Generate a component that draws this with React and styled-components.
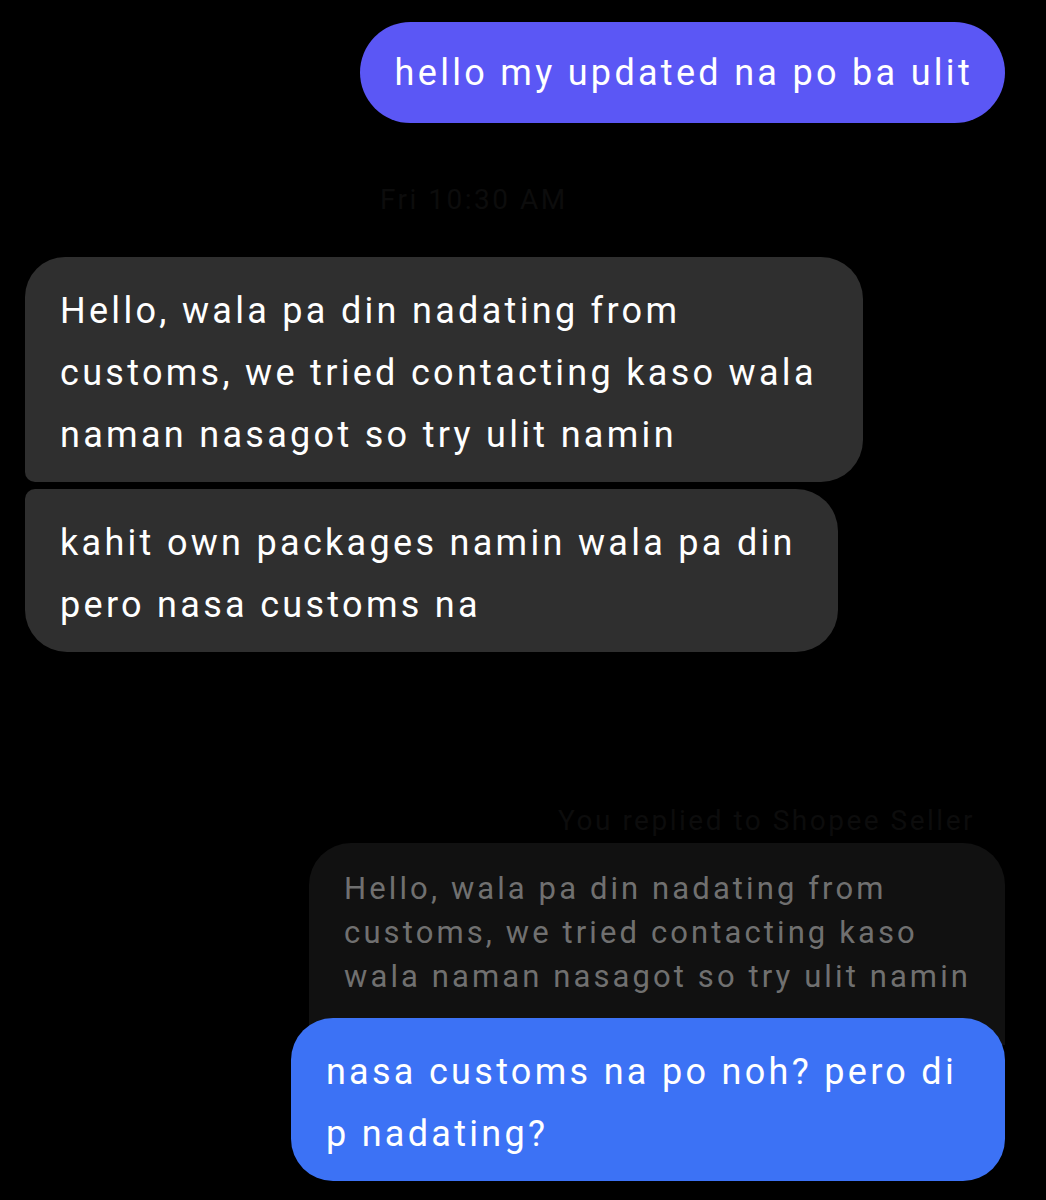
import React from 'react';
import styled, { createGlobalStyle } from 'styled-components';

const GlobalStyle = createGlobalStyle`
  html, body {
    margin: 0;
    padding: 0;
    background: #000;
  }
  body {
    font-family: Roboto, "Liberation Sans", sans-serif;
    -webkit-font-smoothing: antialiased;
  }
`;

const Thread = styled.div`
  width: 1046px;
  height: 1200px;
  box-sizing: border-box;
  padding: 22px 41px 0 25px;
  display: flex;
  flex-direction: column;
  overflow: hidden;
`;

const Row = styled.div`
  display: flex;
  justify-content: ${(p) => (p.$mine ? 'flex-end' : 'flex-start')};
  margin-top: ${(p) => p.$gap || 0}px;
`;

const Stamp = styled.div`
  font-size: 28px;
  line-height: 34px;
  letter-spacing: 2.5px;
  color: #0c0c0c;
  padding-left: ${(p) => p.$indent || 0}px;
  text-align: ${(p) => (p.$right ? 'right' : 'left')};
  padding-right: ${(p) => (p.$right ? 30 : 0)}px;
`;

const tones = {
  indigo: { bg: '#5b57f5', fg: '#ffffff' },
  gray: { bg: '#2f2f2f', fg: '#ffffff' },
  blue: { bg: '#3c72f5', fg: '#ffffff' },
};

const Bubble = styled.div`
  box-sizing: border-box;
  width: fit-content;
  background: ${(p) => tones[p.$tone].bg};
  color: ${(p) => tones[p.$tone].fg};
  font-size: 36px;
  line-height: 62px;
  letter-spacing: 3.3px;
  padding: 23px ${(p) => p.$padRight || 44}px 16px 35px;
  border-radius: ${(p) => p.$radius || '42px'};
  position: relative;
  z-index: 1;
  white-space: nowrap;
`;

const Pill = styled(Bubble)`
  padding: 20px 32px 19px 35px;
  border-radius: 52px;
`;

const ReplyStack = styled.div`
  display: flex;
  flex-direction: column;
  align-items: flex-end;
`;

const Quote = styled.div`
  box-sizing: border-box;
  width: fit-content;
  background: #111111;
  color: #707070;
  font-size: 31px;
  line-height: 44px;
  letter-spacing: 3.1px;
  padding: 24px 34px 46px 35px;
  border-radius: 42px 42px 0 0;
  white-space: nowrap;
`;

const Lines = ({ lines }) =>
  lines.map((l, i) => (
    <React.Fragment key={i}>
      {l}
      {i < lines.length - 1 && <br />}
    </React.Fragment>
  ));

export default function App() {
  return (
    <>
      <GlobalStyle />
      <Thread>
        <Row $mine>
          <Pill $tone="indigo">hello my updated na po ba ulit</Pill>
        </Row>

        <Stamp $indent={355} style={{ marginTop: 60 }}>
          Fri 10:30 AM
        </Stamp>

        <Row $gap={40}>
          <Bubble $tone="gray" $padRight={46} $radius="40px 42px 42px 10px">
            <Lines
              lines={[
                'Hello, wala pa din nadating from',
                'customs, we tried contacting kaso wala',
                'naman nasagot so try ulit namin',
              ]}
            />
          </Bubble>
        </Row>
        <Row $gap={7}>
          <Bubble $tone="gray" $padRight={42} $radius="10px 42px 42px 42px">
            <Lines lines={['kahit own packages namin wala pa din', 'pero nasa customs na']} />
          </Bubble>
        </Row>

        <Stamp $right style={{ marginTop: 152 }}>
          You replied to Shopee Seller
        </Stamp>

        <Row $mine $gap={5}>
          <ReplyStack>
            <Quote>
              <Lines
                lines={[
                  'Hello, wala pa din nadating from',
                  'customs, we tried contacting kaso',
                  'wala naman nasagot so try ulit namin',
                ]}
              />
            </Quote>
            <Bubble $tone="blue" $padRight={48} style={{ marginTop: -27 }}>
              <Lines lines={['nasa customs na po noh? pero di', 'p nadating?']} />
            </Bubble>
          </ReplyStack>
        </Row>
      </Thread>
    </>
  );
}
